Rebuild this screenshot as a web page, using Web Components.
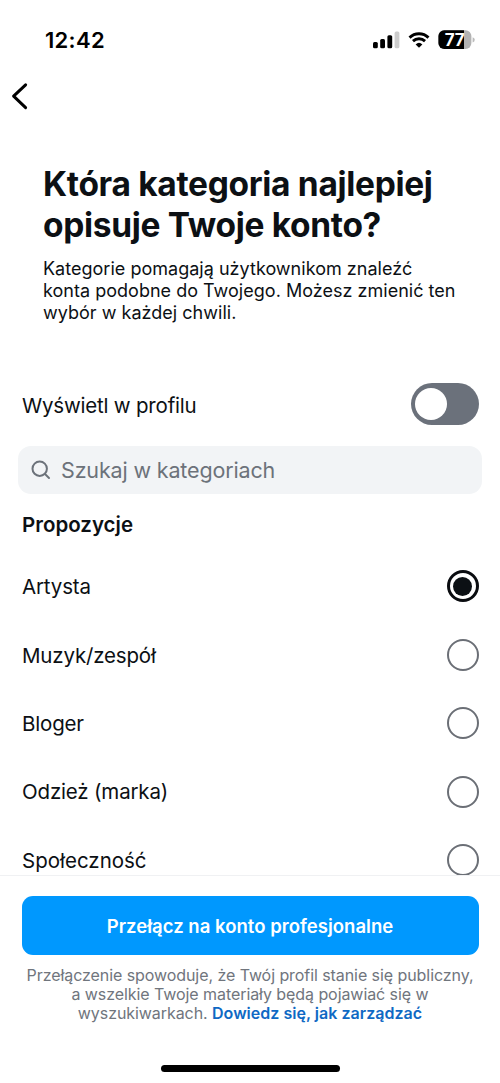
<!DOCTYPE html>
<html lang="pl">
<head>
<meta charset="utf-8">
<title>Kategoria konta</title>
<style>
html,body{margin:0;background:#fff}
body{font-family:Inter,"Liberation Sans",sans-serif;color:#0c1014}
</style>
</head>
<body>
<category-screen></category-screen>
<script>
const define = (name, html) => customElements.define(name, class extends HTMLElement {
  constructor() {
    super();
    this.attachShadow({ mode: 'open' }).innerHTML = html;
  }
});

define('status-bar', `
<style>
:host{display:flex;height:80px;box-sizing:border-box;padding:0 25px 1px 45px;justify-content:space-between;align-items:center;color:#000}
time{font-size:22px;font-weight:600;letter-spacing:.3px;line-height:28px}
.icons{display:flex;align-items:center;height:24px}
svg{display:block}
.battery{display:grid;margin-left:8px}
.battery>*{grid-area:1/1}
.battery span{font-size:17px;line-height:20px;font-weight:700;color:#fff;width:33px;text-align:center;letter-spacing:-.4px}
</style>
<time>12:42</time>
<div class="icons">
<svg width="27" height="18" viewBox="0 0 27 18"><g fill="#000"><rect x="0" y="11" width="4.8" height="6.2" rx="1.5"/><rect x="7.2" y="8" width="4.8" height="9.2" rx="1.5"/><rect x="14.4" y="4.3" width="4.8" height="12.9" rx="1.5"/></g><rect x="21.6" y=".6" width="4.8" height="16.6" rx="1.5" fill="#ccc"/></svg>
<svg style="margin-left:8px" width="22" height="18" viewBox="0 0 23 18"><path d="M1.6 6.5a14.2 14.2 0 0 1 19.8 0M5.2 10.2a9.1 9.1 0 0 1 12.6 0" fill="none" stroke="#000" stroke-width="3"/><path d="M11.5 17.2l-3.5-3.6a5.1 5.1 0 0 1 7 0z"/></svg>
<div class="battery">
<svg width="37" height="20" viewBox="0 0 37 20"><defs><clipPath id="b"><rect x=".4" y=".3" width="33" height="18.6" rx="5.8"/></clipPath></defs><g clip-path="url(#b)"><rect width="34" height="20" fill="#b3b3b3"/><rect width="26" height="20"/></g><path d="M34.6 7.2q2.2.6 2.2 2.6t-2.2 2.6z" fill="#bbb"/></svg>
<span>77</span>
</div>
</div>`);

define('nav-bar', `
<style>:host{display:flex;height:32px;padding-left:10px;align-items:center}svg{display:block}</style>
<svg width="20" height="30" viewBox="0 0 20 30"><path d="M15.6 3.8L3.6 15.2l12 11.4" fill="none" stroke="#000" stroke-width="3" stroke-linecap="round" stroke-linejoin="round"/></svg>`);

define('page-intro', `
<style>
:host{display:block;padding:52px 0 0 43px;white-space:nowrap}
::slotted(h1){margin:0;font-size:33.5px;line-height:41.3px;font-weight:700;letter-spacing:-.32px}
::slotted(p){margin:11px 0 0;font-size:18px;line-height:22.4px;letter-spacing:.02px}
</style><slot></slot>`);

define('toggle-row', `
<style>
:host{display:flex;align-items:center;justify-content:space-between;height:42px;padding:0 21.5px 0 22px;font-size:20.5px;letter-spacing:-.2px}
span{padding-top:2px}
.track{width:68px;height:41.4px;border-radius:21px;background:#6b717b;box-sizing:border-box;padding:4.7px;display:flex}
.track i{width:32px;height:32px;border-radius:50%;background:#fff}
</style><span><slot></slot></span><div class="track" role="switch" aria-checked="false"><i></i></div>`);

define('search-field', `
<style>
:host{display:flex;align-items:center;margin:21.4px 18px 0;height:48px;border-radius:13px;background:#f2f4f6;color:#6c727a;font-size:21.5px;letter-spacing:-.15px;padding-left:13px;box-sizing:border-box;gap:10px}
svg{display:block}
</style>
<svg width="20" height="20" viewBox="0 0 20 20" fill="none" stroke="currentColor" stroke-width="2" stroke-linecap="round"><circle cx="8.7" cy="8.7" r="7.2"/><path d="M14 14l4 4"/></svg><slot></slot>`);

define('radio-row', `
<style>
:host{display:flex;align-items:center;justify-content:space-between;height:68.4px;padding:0 21.5px 0 22px;font-size:20.5px;letter-spacing:-.17px}
.ring{width:32px;height:32px;box-sizing:border-box;border:2px solid #6b6f76;border-radius:50%;display:grid;place-items:center}
:host([checked]) .ring{border:3px solid #0a0c10}
:host([checked]) .ring::after{content:"";width:19px;height:19px;border-radius:50%;background:#0c1014}
span{padding-top:.6px}
</style><span><slot></slot></span><div class="ring" role="radio"></div>`);

define('category-list', `
<style>
:host{display:block;height:380.6px;overflow:hidden;box-sizing:border-box}
h2{margin:0;padding:17px 0 0 22px;font-size:20.5px;line-height:28px;font-weight:600}
div{padding-top:12.8px}
</style><h2>Propozycje</h2><div><slot></slot></div>`);

define('bottom-panel', `
<style>
:host{display:block;border-top:1px solid #f0f1f3;padding:20.5px 21.5px 0;height:187px;box-sizing:border-box}
button{display:block;width:100%;height:58.5px;border:0;border-radius:11px;background:#0098fe;color:#fff;font:600 18.5px/58px Inter,"Liberation Sans",sans-serif;padding:0;letter-spacing:.03px}
p{margin:11px -10px 0;font-size:16px;line-height:19.1px;letter-spacing:-.07px;text-align:center;color:#70757d;white-space:nowrap}
</style>
<button>Przełącz na konto profesjonalne</button>
<p><slot></slot></p>`);

define('home-indicator', `
<style>:host{display:block;width:179px;height:7px;border-radius:4px;background:#000;margin:3px auto 0}</style>`);

define('category-screen', `
<style>
:host{display:block;width:500px;height:1083px;overflow:hidden;background:#fff}
.toggle{margin-top:58.2px}
.loose{letter-spacing:0}
b{color:#0f69c4;font-weight:600;letter-spacing:.03px}
</style>
<status-bar></status-bar>
<nav-bar></nav-bar>
<page-intro><h1>Która kategoria najlepiej<br>opisuje Twoje konto?</h1>
<p>Kategorie pomagają użytkownikom znaleźć<br>konta podobne do Twojego. Możesz zmienić ten<br>wybór w każdej chwili.</p></page-intro>
<toggle-row class="toggle">Wyświetl w profilu</toggle-row>
<search-field>Szukaj w kategoriach</search-field>
<category-list>
<radio-row checked>Artysta</radio-row>
<radio-row>Muzyk/zespół</radio-row>
<radio-row>Bloger</radio-row>
<radio-row>Odzież (marka)</radio-row>
<radio-row class="loose">Społeczność</radio-row>
</category-list>
<bottom-panel>Przełączenie spowoduje, że Twój profil stanie się publiczny,<br>a wszelkie Twoje materiały będą pojawiać się w<br>wyszukiwarkach. <b>Dowiedz się, jak zarządzać</b></bottom-panel>
<home-indicator></home-indicator>`);
</script>
</body>
</html>
